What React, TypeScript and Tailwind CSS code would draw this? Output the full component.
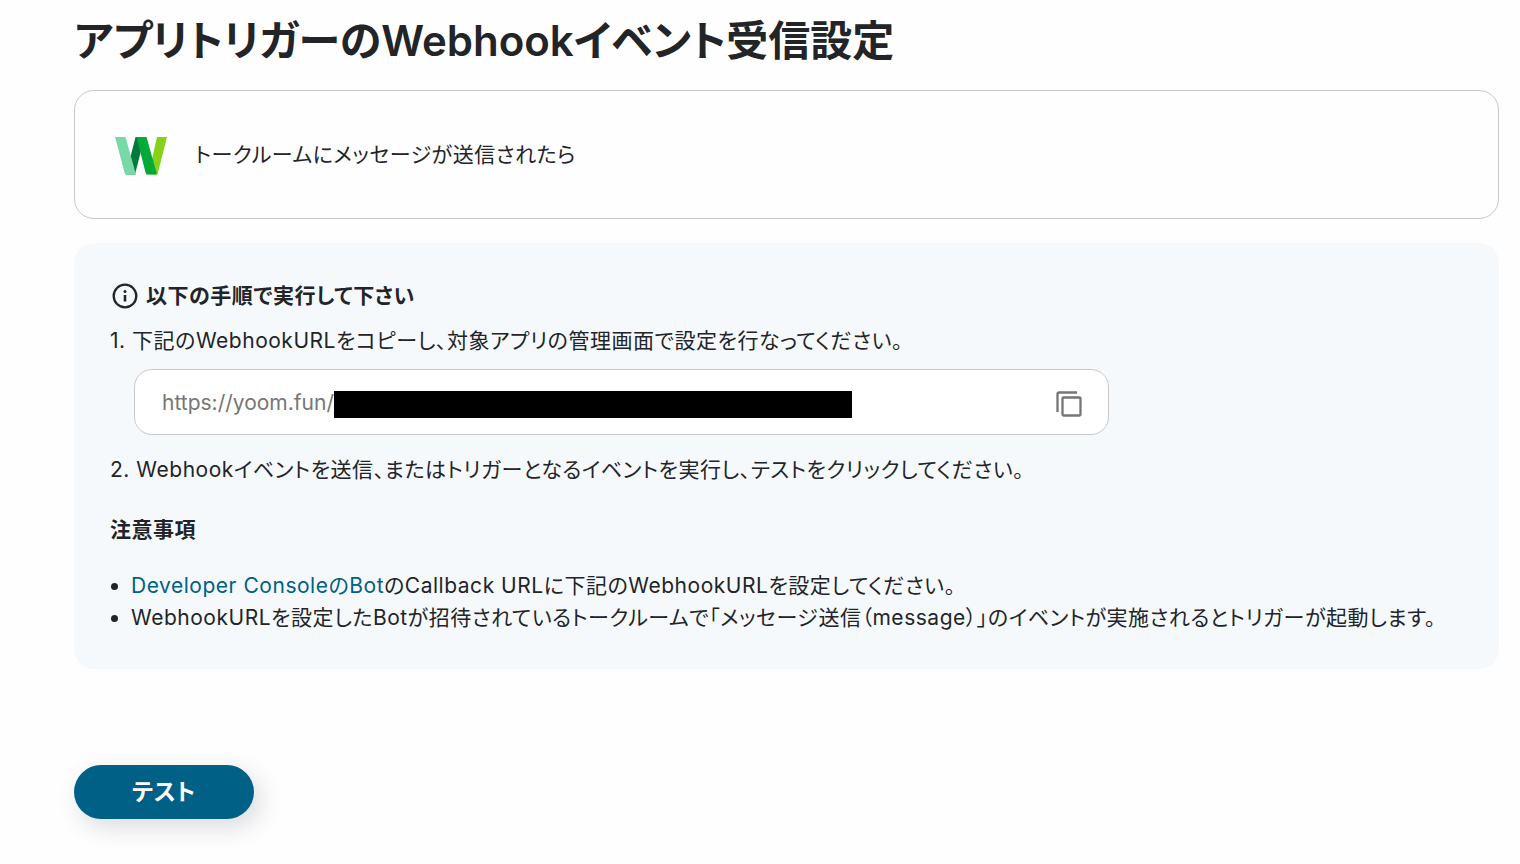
import React from 'react';

const WorksLogo = () => (
  <svg viewBox="0 0 52 38" className="w-[52px] h-[38px] shrink-0" aria-hidden="true">
    <path d="M42 0h10L42.500 37.500h-9z" fill="#86d11a" />
    <path d="M20.500 0h9L20 37.500h-9z" fill="#037a3c" />
    <path d="M0 0h10.500L21 37.500H11.500C10.500 37.500 10 37.200 9.800 36.500z" fill="#79d9a6" />
    <path d="M21.500 0H31.500L42 37.500H32.500C31.500 37.500 31 37.200 30.800 36.500z" fill="#02ab38" />
  </svg>
);

const InfoIcon = () => (
  <svg viewBox="0 0 26 26" className="w-[26px] h-[26px] shrink-0" fill="none" aria-hidden="true">
    <circle cx="13" cy="13" r="11.300" stroke="#222428" strokeWidth="2.300" />
    <circle cx="13" cy="8.500" r="1.500" fill="#222428" />
    <path d="M13 12v6.500" stroke="#222428" strokeWidth="2.600" />
  </svg>
);

const CopyIcon = () => (
  <svg viewBox="0 0 26 26" className="w-[26px] h-[26px]" fill="none" stroke="#767676" strokeWidth="2.300" aria-hidden="true">
    <path d="M1.500 21V3Q1.500 1.500 3 1.500H21" />
    <rect x="6.500" y="6.500" width="18" height="18" rx="1" />
  </svg>
);

export default function App() {
  return (
    <main className="min-h-screen bg-[#fefefe] pl-[74px] pr-[21px] pt-3 pb-11 font-['Inter','Noto_Sans_CJK_JP',sans-serif] [font-feature-settings:'palt'] text-[21px] leading-8 tracking-wide text-[#222428]" lang="ja">
      <h1 className="text-[42px] leading-[58px] font-semibold tracking-normal">アプリトリガーのWebhookイベント受信設定</h1>

      <section className="mt-5 flex h-[129px] items-center gap-7 rounded-[20px] border border-[#c8c8cb] px-10 pt-[2px]">
        <WorksLogo />
        <p className="pb-[2px]">トークルームにメッセージが送信されたら</p>
      </section>

      <section className="mt-6 rounded-[20px] bg-[#f5f9fc] px-9 pt-[37px] pb-[35px]">
        <h2 className="flex items-center gap-2 pl-[2px] font-semibold">
          <InfoIcon />
          以下の手順で実行して下さい
        </h2>

        <label htmlFor="webhook-url" className="mt-[13px] block">
          1. 下記のWebhookURLをコピーし、対象アプリの管理画面で設定を行なってください。
        </label>
        <div className="mt-3 ml-6 flex h-[66px] max-w-[975px] items-center rounded-[18px] border border-[#c8c8cb] bg-white pl-[27px] pr-[26px] pt-1">
          <input
            id="webhook-url"
            type="text"
            readOnly
            value="https://yoom.fun/"
            className="w-[172px] bg-transparent pb-[2px] tracking-normal text-[#767676] outline-none"
          />
          <span className="h-[27px] w-[518px] bg-black" />
          <button type="button" aria-label="コピー" className="ml-auto">
            <CopyIcon />
          </button>
        </div>
        <p className="mt-[19px]">
          2. Webhookイベントを送信、またはトリガーとなるイベントを実行し、テストをクリックしてください。
        </p>

        <h3 className="mt-7 font-semibold">注意事項</h3>
        <ul className="mt-6 list-disc pl-[21px]">
          <li>
            <a href="#developer-console" className="text-[#006085]">Developer ConsoleのBot</a>
            のCallback URLに下記のWebhookURLを設定してください。
          </li>
          <li>WebhookURLを設定したBotが招待されているトークルームで「メッセージ送信（message）」のイベントが実施されるとトリガーが起動します。</li>
        </ul>
      </section>

      <button
        type="button"
        className="mt-24 flex h-[54px] w-[180px] items-center justify-center rounded-full bg-[#006085] text-[23px] font-semibold tracking-wide text-white shadow-[6px_8px_24px_rgba(34,36,60,0.16)]"
      >
        テスト
      </button>
    </main>
  );
}
